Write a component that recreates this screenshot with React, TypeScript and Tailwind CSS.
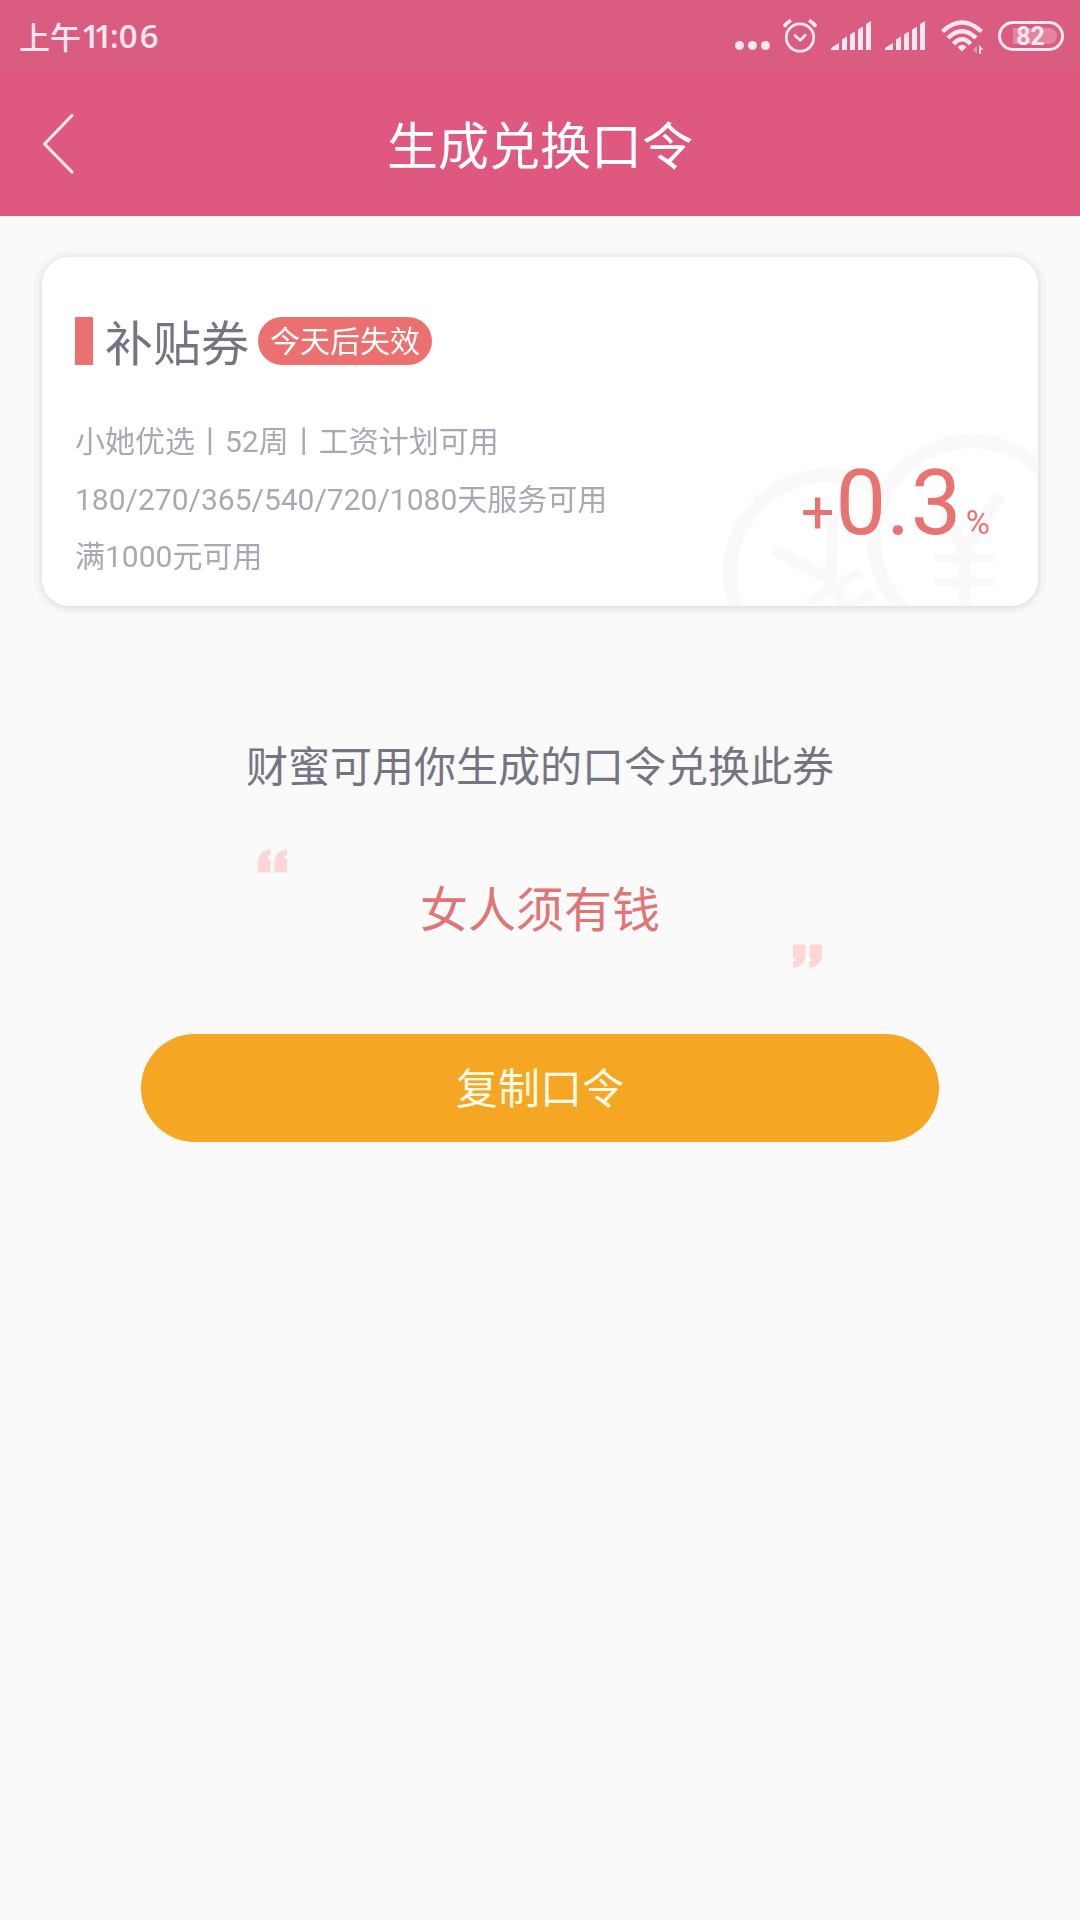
import clsx from "clsx";

const DETAILS = [
    "小她优选丨52周丨工资计划可用",
    "180/270/365/540/720/1080天服务可用",
    "满1000元可用",
];

function AlarmIcon() {
    return (
        <svg width="36" height="36" viewBox="0 0 36 36" fill="none" stroke="currentColor" strokeLinecap="round" strokeLinejoin="round">
            <circle cx="18" cy="19.5" r="13.7" strokeWidth="2.8" />
            <path d="M13 17.5l5.2 4.7 5-5" strokeWidth="2.8" />
            <path d="M2 8.6Q4.5 5 9 2.3M34 8.6Q31.5 5 27 2.3" strokeWidth="3.6" strokeLinecap="butt" />
        </svg>
    );
}

function SignalIcon() {
    return (
        <svg width="41" height="30" viewBox="0 0 41 30" fill="currentColor">
            <path d="M0 29v-2l8-5v7zM11 29V18.500l5-3V29zM19 29V13.500l5-3V29zM27 29V8.500l5-3V29zM35 29V3l5-3v29z" />
        </svg>
    );
}

function WifiIcon() {
    return (
        <svg width="44" height="36" viewBox="0 0 44 36" fill="none" stroke="currentColor" strokeWidth="4.4">
            <path d="M1.5 11.5Q21 -6.500 40.500 11.500" />
            <path d="M7 18Q21 4.500 35 18" />
            <path d="M12.500 24Q21 14.500 29.500 24" />
            <path d="M16.500 27Q21 22.500 25.500 27L21 31.500z" fill="currentColor" stroke="none" />
            <path d="M36 26v8l-4-4.500z" fill="currentColor" stroke="none" opacity="0.4" />
            <path d="M38 34v-9l4.500 4.500H40V34z" fill="currentColor" stroke="none" />
        </svg>
    );
}

function Battery({ level }: { level: number }) {
    return (
        <div className="relative flex h-[30px] w-[66px] items-center justify-center rounded-full border-3 border-current">
            <div className="absolute top-[4px] right-[4px] h-4 w-[44px] rounded-r-full bg-white/25" />
            <span className="relative mr-[1px] font-[Roboto] text-[25px] leading-none font-bold">{level}</span>
        </div>
    );
}

function StatusBar() {
    return (
        <div className="flex h-[72px] items-start justify-between bg-[#da5c80] text-[#ffe6ef]">
            <div className="flex pt-[14px] pl-[19px] font-['Noto_Sans_CJK_SC',sans-serif] text-[31px] leading-[44px] font-medium">
                <span>上午</span>
                <div className="flex font-['Open_Sans'] text-[33px] font-semibold">
                    <span className="-tracking-[6px]">11</span>
                    <span className="pl-[3px]">:</span>
                    <span className="tracking-[2px]">06</span>
                </div>
            </div>
            <div className="flex pr-4">
                <div className="mt-[41px] mr-3 flex gap-1">
                    <i className="size-[9px] rounded-full bg-current" />
                    <i className="size-[9px] rounded-full bg-current" />
                    <i className="size-[9px] rounded-full bg-current" />
                </div>
                <div className="mt-[18px] mr-[13px]"><AlarmIcon /></div>
                <div className="mt-[21px] mr-[13px]"><SignalIcon /></div>
                <div className="mt-[21px] mr-[15px]"><SignalIcon /></div>
                <div className="mt-[20px] mr-[13px]"><WifiIcon /></div>
                <div className="mt-[21px]"><Battery level={82} /></div>
            </div>
        </div>
    );
}

function NavBar({ title }: { title: string }) {
    return (
        <div className="grid h-36 grid-cols-[120px_1fr_120px] items-center bg-[#df587f] text-white">
            <button className="pl-[42px]" aria-label="返回">
                <svg width="34" height="62" viewBox="0 0 34 62" fill="none" stroke="#ffe9f1" strokeWidth="3.2" strokeLinecap="round" strokeLinejoin="round">
                    <path d="M30 2.500L2.500 31l27.500 28" />
                </svg>
            </button>
            <h1 className="pt-[8px] text-center text-[51px] leading-[72px]">{title}</h1>
        </div>
    );
}

function Coin({ transform, markTransform }: { transform: string; markTransform?: string }) {
    return (
        <g transform={transform}>
            <circle r="98" fill="#fff" strokeWidth="14" />
            <g transform={markTransform}>
                <path d="M-40 -44L-7 11L28 -44M-7 9V80" strokeWidth="12" />
                <path d="M-37 19H23M-37 43H23" strokeWidth="9" />
            </g>
        </g>
    );
}

function Coupon() {
    return (
        <section className="relative mx-[42px] mt-[41px] h-[349px] overflow-hidden rounded-[27px] bg-white">
            <svg className="absolute right-0 bottom-0" width="338" height="190" viewBox="700 416 338 190" fill="none" stroke="#f9f9f9">
                <Coin transform="translate(828 573) rotate(-30)" markTransform="translate(5.6 -3.7)" />
                <Coin transform="translate(972 539)" />
            </svg>
            <div className="relative flex items-center pt-[60px] pl-[33px]">
                <div className="h-12 w-[18px] bg-[#eb7171]" />
                <h2 className="ml-3 pt-[8px] text-5xl leading-[40px] text-[#757482]">补贴券</h2>
                <span className="ml-[9px] h-12 w-[174px] rounded-full bg-[#eb7171] text-center text-3xl leading-[50px] text-white">今天后失效</span>
            </div>
            <div className="relative flex justify-between pt-[48px] pl-[33px]">
                <div className="text-3xl text-[#a9a9b4]">
                    {DETAILS.map((line) => (
                        <p key={line} className="leading-[58px] last:leading-[56px]">{line}</p>
                    ))}
                </div>
                <div className="mt-[38px] mr-[48px] flex h-[106px] items-baseline font-[Roboto] text-[#e87373]">
                    <span className="relative -top-px mr-px text-[59px] leading-[106px]">+</span>
                    <span className="text-[90px] leading-[106px] tracking-[0.5px]">0.3</span>
                    <span className="ml-[4px] text-[33px] leading-[106px]">%</span>
                </div>
            </div>
        </section>
    );
}

function QuoteMark({ closing }: { closing?: boolean }) {
    return (
        <svg className={clsx("h-6 w-[29px]", closing && "rotate-180")} viewBox="0 0 29 24" fill="#ffd6d6">
            <path d="M0 23.500V14Q0 2 12.500 0V6Q9.500 7 9.500 9.500H12.500V23.500zM16.500 23.500V14Q16.500 2 29 0V6Q26 7 26 9.500H29V23.500z" />
        </svg>
    );
}

export default function App() {
    return (
        <div className="h-[1920px] w-[1080px] overflow-hidden bg-[#fafafa] font-[Roboto,'Noto_Sans_CJK_SC',sans-serif]">
            <StatusBar />
            <NavBar title="生成兑换口令" />
            <div className="[filter:drop-shadow(0_1px_5px_rgba(0,0,0,0.16))]">
                <Coupon />
            </div>
            <main className="flex flex-col items-center">
                <p className="mt-[132px] text-[42px] leading-[60px] text-[#757482]">财蜜可用你生成的口令兑换此券</p>
                <div className="mt-[51px] flex h-[119px] w-[564px] justify-between">
                    <QuoteMark />
                    <p className="mt-[27px] text-5xl leading-[70px] text-[#e07575]">女人须有钱</p>
                    <div className="self-end"><QuoteMark closing /></div>
                </div>
                <button className="mt-[66px] h-[108px] w-[798px] rounded-full bg-[#f5a623] pt-[2px] text-[42px] text-[#fffbe6]">复制口令</button>
            </main>
        </div>
    );
}
